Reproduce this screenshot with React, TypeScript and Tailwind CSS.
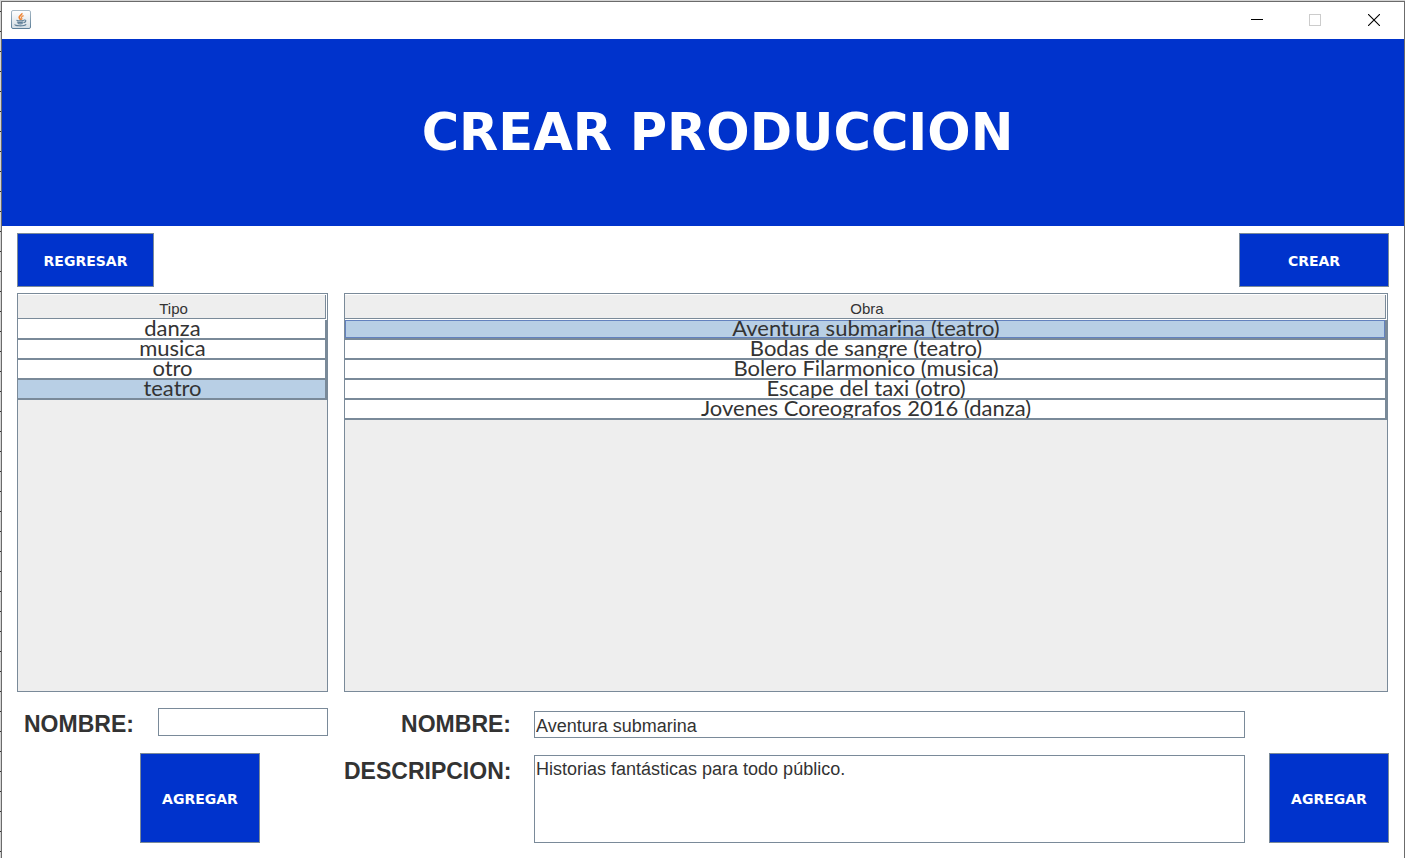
import { useState } from "react";
import type { ReactNode } from "react";

const tipos = ["danza", "musica", "otro", "teatro"];
const obras = [
  "Aventura submarina (teatro)",
  "Bodas de sangre (teatro)",
  "Bolero Filarmonico (musica)",
  "Escape del taxi (otro)",
  "Jovenes Coreografos 2016 (danza)",
];

function JavaIcon() {
  return (
    <svg width="20" height="19" viewBox="0 0 20 19" aria-hidden="true">
      <defs>
        <linearGradient id="tile" x1="0" y1="0" x2="0" y2="1">
          <stop offset="0" stopColor="#ffffff" />
          <stop offset="1" stopColor="#d3dde4" />
        </linearGradient>
        <linearGradient id="edge" x1="0" y1="0" x2="0" y2="1">
          <stop offset="0" stopColor="#a9bac6" />
          <stop offset="1" stopColor="#5b7e98" />
        </linearGradient>
      </defs>
      <rect x="0.5" y="0.5" width="19" height="18" rx="1.5" fill="url(#tile)" stroke="url(#edge)" />
      <path d="M10.8 3.2c.7 1.6-2.9 2.7-2.6 4.3.1.9 1.2 1.4 1.4 2.5" fill="none" stroke="#ee8434" strokeWidth="1.7" />
      <path d="M12.6 5.6c-1.6.6-2.6 1.4-2 2.3.5.7.4 1.2-.2 1.9" fill="none" stroke="#ee9148" strokeWidth="1.3" />
      <path d="M5.4 10.2c2.2.7 5.7.6 7.6 0M6 12c2 .6 4.5.6 6.4 0M6.7 13.5c1.6.5 3.6.5 5 0" fill="none" stroke="#5f7f97" strokeWidth="1.2" />
      <path d="M13 10c2.6-.5 2.4 2-.4 2.8" fill="none" stroke="#5f7f97" strokeWidth="1.1" />
      <path d="M4.2 14.3c-1.6 1.8 9 2.1 11 .1" fill="none" stroke="#5f7f97" strokeWidth="1.2" />
    </svg>
  );
}

function TitleBar() {
  return (
    <div className="flex h-[37px] items-center justify-between bg-white pb-[2px] pl-[9px]">
      <JavaIcon />
      <div className="flex h-full">
        <button type="button" aria-label="Minimizar" className="grid h-full w-[58px] place-items-center">
          <svg width="12" height="12" shapeRendering="crispEdges"><path d="M0 5.5h12" stroke="#000" /></svg>
        </button>
        <button type="button" aria-label="Maximizar" disabled className="grid h-full w-[58px] place-items-center">
          <svg width="12" height="12" shapeRendering="crispEdges"><rect x="0.5" y="0.5" width="11" height="11" fill="none" stroke="#ccc" /></svg>
        </button>
        <button type="button" aria-label="Cerrar" className="grid h-full w-[60px] place-items-center">
          <svg width="12" height="12"><path d="M0 0l12 12M12 0l-12 12" stroke="#000" strokeWidth="1.1" /></svg>
        </button>
      </div>
    </div>
  );
}

function ActionButton({ size, children }: { size: string; children: ReactNode }) {
  return (
    <button
      type="button"
      className={`shrink-0 border border-[#7a8a99] bg-[#0033cc] pt-[3px] font-['DejaVu_Sans',sans-serif] text-[14px] font-bold text-white ${size}`}
    >
      {children}
    </button>
  );
}

type ListTableProps = {
  heading: string;
  rows: string[];
  selected: number;
  focused?: boolean;
  onSelect: (index: number) => void;
  className: string;
};

function ListTable({ heading, rows, selected, focused, onSelect, className }: ListTableProps) {
  return (
    <div className={`border border-[#7a8a99] bg-[#eeeeee] ${className}`}>
      <table className="w-full border-separate border-spacing-0 text-center">
        <thead>
          <tr>
            <th className="bg-white pt-px pr-px pb-px font-['Liberation_Sans',sans-serif] text-[15px] font-normal text-[#333]">
              <div className="h-6 border-r border-b border-[#7a8a99] bg-[#eeeeee] pt-[2px] pl-1 leading-6">{heading}</div>
            </th>
          </tr>
        </thead>
        <tbody>
          {rows.map((row, i) => {
            const fill = i === selected ? "bg-[#b8cfe5]" : "bg-white";
            const outline = i === selected && focused ? "inset-ring inset-ring-[#6382bf]" : "";
            return (
              <tr key={row} onClick={() => onSelect(i)}>
                <td className={`border-r-2 border-b-2 border-[#7a8a99] p-0 ${fill}`}>
                  <div
                    className={`h-[18px] overflow-hidden pl-[2px] font-['Lato',sans-serif] text-[22px] leading-4 whitespace-nowrap text-[#333] ${outline}`}
                  >
                    {row}
                  </div>
                </td>
              </tr>
            );
          })}
        </tbody>
      </table>
    </div>
  );
}

const labelClass = "font-['Liberation_Sans',sans-serif] text-[23px] leading-[27px] font-bold text-[#333]";
const fieldClass =
  "block w-full border border-[#7a8a99] bg-white px-px font-['Liberation_Sans',sans-serif] text-[18px] text-[#333] outline-none";

export default function App() {
  const [tipo, setTipo] = useState(3);
  const [obra, setObra] = useState(0);

  return (
    <div className="flex min-h-screen bg-[#d4d4d4] bg-[repeating-linear-gradient(180deg,transparent_0_11px,#333_11px_12px,transparent_12px_20px)] pt-px pl-px">
      <div className="flex flex-1 flex-col border-t border-r border-l border-[#6b6b6b] bg-white">
        <TitleBar />
        <header className="grid h-[187px] place-items-center bg-[#0033cc] pl-[29px]">
          <h1 className="font-['DejaVu_Sans',sans-serif] text-[51px] leading-none font-bold whitespace-nowrap text-white">
            CREAR PRODUCCION
          </h1>
        </header>

        <main className="flex flex-1 flex-col px-[15px] pt-[7px] pb-[15px]">
          <div className="flex justify-between">
            <ActionButton size="h-[54px] w-[137px]">REGRESAR</ActionButton>
            <ActionButton size="h-[54px] w-[150px]">CREAR</ActionButton>
          </div>

          <div className="mt-[6px] flex flex-1 gap-4 pr-px">
            <ListTable heading="Tipo" rows={tipos} selected={tipo} onSelect={setTipo} className="w-[311px]" />
            <ListTable heading="Obra" rows={obras} selected={obra} focused onSelect={setObra} className="flex-1" />
          </div>

          <div className="mt-4 flex gap-4">
            <form className="flex w-[311px] flex-col items-end justify-between">
              <div className="flex w-full items-start justify-between pl-[7px]">
                <label htmlFor="tipo-nombre" className={`${labelClass} pt-[3px]`}>NOMBRE:</label>
                <div className="w-[170px]">
                  <input id="tipo-nombre" className={`${fieldClass} h-7`} />
                </div>
              </div>
              <div className="w-[188px]">
                <ActionButton size="h-[90px] w-[120px]">AGREGAR</ActionButton>
              </div>
            </form>

            <form className="flex flex-1 items-end gap-6">
              <div className="grid flex-1 grid-cols-[167px_1fr] gap-x-[23px] gap-y-[17px] pt-[3px]">
                <label htmlFor="obra-nombre" className={`${labelClass} text-right`}>NOMBRE:</label>
                <input id="obra-nombre" defaultValue="Aventura submarina" className={`${fieldClass} h-[27px] pt-[3px]`} />
                <label htmlFor="obra-descripcion" className={`${labelClass} pt-[3px] text-right`}>DESCRIPCION:</label>
                <textarea
                  id="obra-descripcion"
                  defaultValue="Historias fantásticas para todo público."
                  className={`${fieldClass} h-[88px] resize-none pt-[3px] leading-5`}
                />
              </div>
              <ActionButton size="h-[90px] w-[120px]">AGREGAR</ActionButton>
            </form>
          </div>
        </main>
      </div>
    </div>
  );
}
